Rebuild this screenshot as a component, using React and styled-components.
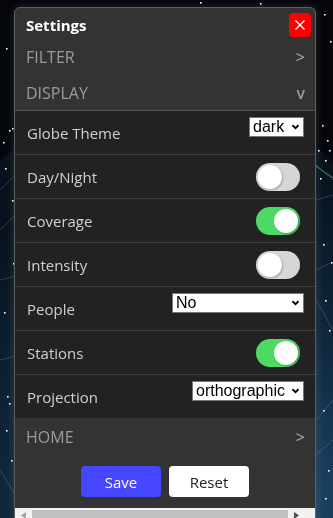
import React, { useState } from 'react';
import styled, { createGlobalStyle } from 'styled-components';

const GlobalStyle = createGlobalStyle`
  html, body {
    margin: 0;
    height: 100%;
    overflow: hidden;
    background: #04060b;
  }
  body {
    font-family: 'Open Sans', 'Noto Sans', sans-serif;
  }
`;

const items = [
  { label: 'Globe Theme', type: 'select', width: 55, options: ['dark', 'light'] },
  { label: 'Day/Night', type: 'toggle', on: false },
  { label: 'Coverage', type: 'toggle', on: true },
  { label: 'Intensity', type: 'toggle', on: false },
  { label: 'People', type: 'select', width: 132, options: ['No', 'Yes'] },
  { label: 'Stations', type: 'toggle', on: true },
  { label: 'Projection', type: 'select', width: 112, options: ['orthographic', 'mercator'] },
];

const stars = [
  [6, 48], [20, 50], [9, 130], [12, 128], [3, 142], [5, 168], [12, 200], [13, 263], [4, 312],
  [7, 396], [9, 403], [6, 430], [11, 460], [324, 14], [330, 41], [322, 125], [327, 140],
  [318, 150], [329, 150], [325, 160], [320, 178], [323, 244], [331, 262], [325, 300],
  [329, 330], [323, 410], [328, 470], [325, 498], [260, 3], [200, 2],
];

const Backdrop = () => (
  <Canvas viewBox="0 0 333 518" preserveAspectRatio="none">
    <defs>
      <radialGradient id="globe" cx="0.62" cy="0.85" r="0.75">
        <stop offset="0" stopColor="#23557e" />
        <stop offset="0.55" stopColor="#10283d" />
        <stop offset="1" stopColor="#07111b" />
      </radialGradient>
    </defs>
    <circle cx="166" cy="350" r="252" fill="url(#globe)" />
    <g stroke="rgba(150,165,175,0.35)" strokeWidth="0.8" fill="none">
      <path d="M0 190 L40 150" />
      <path d="M0 230 L30 200" />
      <path d="M0 280 L40 270" />
      <path d="M0 470 L30 520" />
      <path d="M0 360 L40 350" />
      <path d="M316 165 L333 180" />
      <path d="M316 200 L333 195" />
      <path d="M316 270 L333 262" />
      <path d="M316 300 L333 330" />
      <path d="M316 420 L333 400" />
      <path d="M316 455 L333 440" />
    </g>
    <path d="M316 166 L333 178" stroke="#2b9a3c" strokeWidth="1" />
    <g fill="#fff">
      {stars.map(([x, y], i) => (
        <rect key={i} x={x} y={y} width="1.6" height="1.6" />
      ))}
    </g>
  </Canvas>
);

const Toggle = ({ on }) => {
  const [checked, setChecked] = useState(on);
  return (
    <Track $on={checked} onClick={() => setChecked(!checked)}>
      <Knob />
    </Track>
  );
};

const Select = ({ width, options }) => (
  <SelectWrap>
    <SelectBox $width={width} defaultValue={options[0]}>
      {options.map((o) => (
        <option key={o}>{o}</option>
      ))}
    </SelectBox>
    <Chevron viewBox="0 0 10 7">
      <polyline points="1.5,1.5 5,5 8.5,1.5" />
    </Chevron>
  </SelectWrap>
);

// the panel's horizontal scrollbar, drawn since the headless browser hides real ones
const ScrollBar = () => (
  <ScrollTrack>
    <ScrollButton>
      <svg width="5" height="7" viewBox="0 0 5 7">
        <polygon points="5,0 5,7 0,3.5" fill="#a3a3a3" />
      </svg>
    </ScrollButton>
    <ScrollThumb />
    <ScrollButton>
      <svg width="5" height="7" viewBox="0 0 5 7">
        <polygon points="0,0 0,7 5,3.5" fill="#505050" />
      </svg>
    </ScrollButton>
  </ScrollTrack>
);

const App = () => {
  return (
    <>
      <GlobalStyle />
      <Backdrop />
      <Panel>
        <TitleBar>
          <Title>Settings</Title>
          <CloseButton aria-label="close">
            <svg width="12" height="12" viewBox="0 0 12 12">
              <path d="M1.5 1.5 L10.5 10.5 M10.5 1.5 L1.5 10.5" stroke="#fff" strokeWidth="1.4" />
            </svg>
          </CloseButton>
        </TitleBar>

        <SectionHeader>
          <span>FILTER</span>
          <Caret>&gt;</Caret>
        </SectionHeader>
        <SectionHeader $h={35}>
          <span>DISPLAY</span>
          <Caret>v</Caret>
        </SectionHeader>

        <ItemList>
          {items.map((item) => (
            <ItemRow key={item.label}>
              <ItemLabel>{item.label}</ItemLabel>
              {item.type === 'toggle' ? (
                <Toggle on={item.on} />
              ) : (
                <Select width={item.width} options={item.options} />
              )}
            </ItemRow>
          ))}
        </ItemList>

        <SectionHeader $h={38}>
          <span>HOME</span>
          <Caret>&gt;</Caret>
        </SectionHeader>

        <ButtonBar>
          <ActionButton $primary>Save</ActionButton>
          <ActionButton>Reset</ActionButton>
        </ButtonBar>
        <ScrollBar />
      </Panel>
    </>
  );
};

export default App;

const Canvas = styled.svg`
  position: fixed;
  inset: 0;
  width: 100%;
  height: 100%;
  z-index: 0;
`;

const Panel = styled.div`
  position: relative;
  z-index: 1;
  box-sizing: border-box;
  width: 302px;
  margin: 7px 0 0 14px;
  background: #333;
  border: 1px solid #5e5e5e;
  border-radius: 6px;
  box-shadow: 0 0 10px rgba(190, 200, 215, 0.18);
  overflow: hidden;
`;

const TitleBar = styled.div`
  display: flex;
  justify-content: space-between;
  align-items: center;
  height: 31px;
  padding: 3px 4px 0 11px;
  box-sizing: border-box;
`;

const Title = styled.span`
  color: #fff;
  font-weight: 700;
  font-size: 15px;
`;

const CloseButton = styled.button`
  display: flex;
  align-items: center;
  justify-content: center;
  width: 22px;
  height: 24px;
  padding: 0;
  border: none;
  border-radius: 4px;
  background: #ff0000;
  cursor: pointer;
`;

const SectionHeader = styled.div`
  display: flex;
  justify-content: space-between;
  align-items: center;
  height: ${(p) => p.$h || 36}px;
  padding: 0 10px 0 11px;
  color: #9b9b9b;
  font-size: 16px;
`;

const Caret = styled.span`
  font-size: 16px;
  font-weight: 600;
  color: #9b9b9b;
`;

const ItemList = styled.div`
  border-top: 1px solid #555;
  background: #222;
`;

const ItemRow = styled.div`
  display: flex;
  justify-content: space-between;
  align-items: center;
  height: 43px;
  padding: 0 11px 0 12px;
  border-bottom: 1px solid #3e3e3e;

  &:last-child {
    border-bottom: none;
  }
`;

const ItemLabel = styled.span`
  color: #cdd1d6;
  font-size: 15px;
`;

const Track = styled.div`
  display: flex;
  justify-content: ${(p) => (p.$on ? 'flex-end' : 'flex-start')};
  align-items: center;
  box-sizing: border-box;
  width: 44px;
  height: 28px;
  margin-right: 4px;
  padding: 2px;
  border-radius: 14px;
  background: ${(p) => (p.$on ? '#4cd964' : '#d6d6d6')};
  cursor: pointer;
`;

const Knob = styled.div`
  width: 24px;
  height: 24px;
  border-radius: 50%;
  background: #fff;
  box-shadow: 1px 1px 2px rgba(0, 0, 0, 0.25);
`;

const SelectWrap = styled.div`
  position: relative;
  align-self: flex-start;
  margin-top: 6px;
  display: flex;
`;

const SelectBox = styled.select`
  appearance: none;
  box-sizing: border-box;
  width: ${(p) => p.$width}px;
  height: 20px;
  margin: 0;
  padding: 0 16px 0 3px;
  border: 1px solid #767676;
  border-radius: 0;
  background: #fff;
  color: #000;
  font-family: 'Liberation Sans', Arial, sans-serif;
  font-size: 16px;
  line-height: 18px;
  outline: none;
`;

const Chevron = styled.svg`
  position: absolute;
  right: 4px;
  top: 7px;
  width: 9px;
  height: 6px;
  pointer-events: none;

  polyline {
    fill: none;
    stroke: #000;
    stroke-width: 2.2;
  }
`;

const ButtonBar = styled.div`
  display: flex;
  justify-content: center;
  gap: 8px;
  padding: 10px 0 11px;
`;

const ActionButton = styled.button`
  width: 80px;
  height: 31px;
  border: none;
  border-radius: 4px;
  background: ${(p) => (p.$primary ? '#4646ff' : '#fff')};
  color: ${(p) => (p.$primary ? '#fff' : '#222')};
  font-family: 'Open Sans', sans-serif;
  font-size: 15px;
  cursor: pointer;
`;

const ScrollTrack = styled.div`
  display: flex;
  align-items: stretch;
  height: 15px;
  background: #f1f1f1;
`;

const ScrollButton = styled.div`
  display: flex;
  align-items: center;
  justify-content: center;
  width: 17px;
  flex: none;
`;

const ScrollThumb = styled.div`
  width: 256px;
  margin: 2px 0;
  background: #c1c1c1;
`;
